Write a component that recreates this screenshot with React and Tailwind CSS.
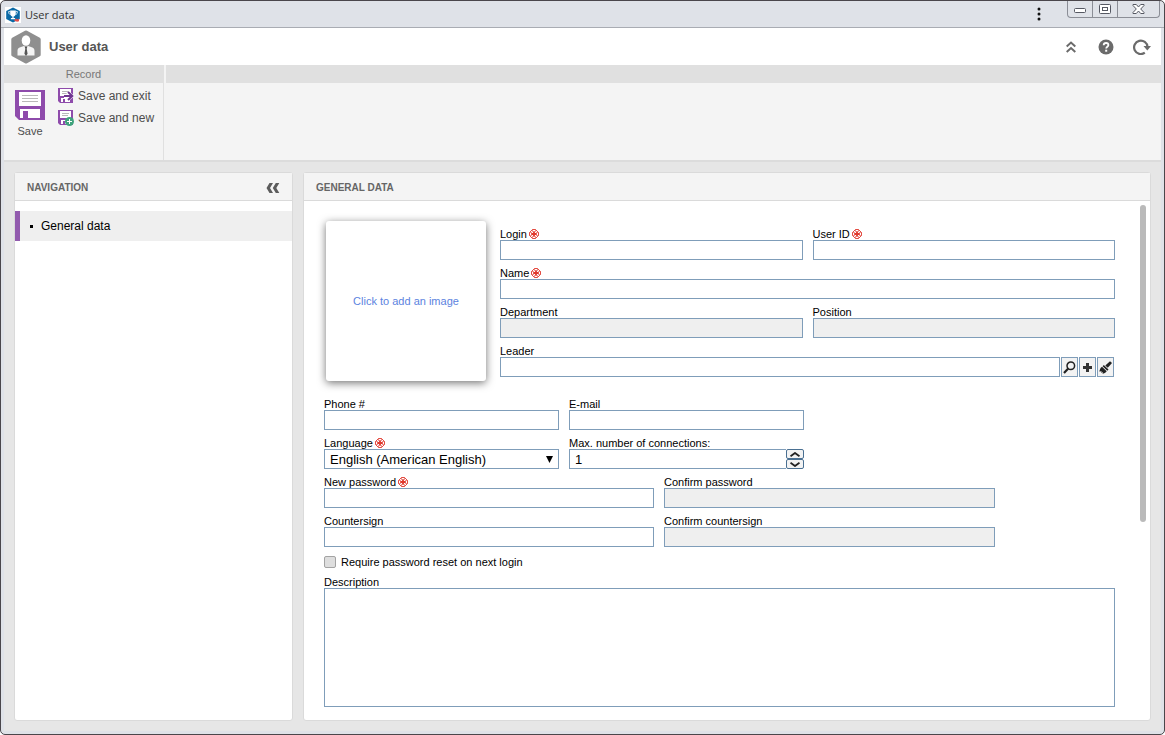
import React, { useState } from 'react';

const inputClass = 'block h-5 w-full min-w-0 rounded-none border border-[#7f9db9] bg-white px-[5px] text-[13px] text-black outline-none disabled:bg-[#efefef]';

function RequiredIcon() {
  return (
    <svg width="10" height="10" viewBox="0 0 10 10" fill="none" stroke="#e0382c" className="shrink-0">
      <path d="M3.500 0.500h3l3 3v3l-3 3h-3l-3-3v-3z" strokeWidth="0.9" />
      <path d="M5 2.200v5.600M2.200 5h5.600" strokeWidth="1.800" />
      <path d="M3.500 0.500v2l-1 1h-2M6.500 0.500v2l1 1h2M3.500 9.500v-2l-1-1h-2M6.500 9.500v-2l1-1h2" strokeWidth="0.600" />
    </svg>
  );
}

function Field({ id, label, required, children, disabled }) {
  return (
    <div className="min-w-0">
      <label htmlFor={id} className="flex h-[13px] items-center gap-0.5 whitespace-nowrap pt-px text-[11px] leading-[13px] text-black">
        {label}
        {required && <RequiredIcon />}
      </label>
      {children || <input id={id} type="text" disabled={disabled} className={inputClass} />}
    </div>
  );
}

function AppLogo() {
  return (
    <svg width="16" height="16" viewBox="0 0 16 16" className="bg-white">
      <path d="M8 0.4l6.8 3.6v8L8 15.6 1.2 12V4z" fill="#0b6aa6" />
      <path d="M5.2 3.6h5.6v2.6c0 1.8-1 3-2.2 3.3v1.5h1.5v1.2H5.9V11h1.5V9.5C6.200 9.200 5.200 8 5.200 6.200z" fill="#fff" />
      <path d="M5 4.600H3.600c0 1.700.6 2.700 1.900 2.900M11 4.600h1.400c0 1.700-.6 2.700-1.900 2.900" fill="none" stroke="#fff" strokeWidth="0.8" />
      <path d="M9 13.600l2-2 1.500 1 1.500-1v2.600l-2 .6z" fill="#e2504c" />
    </svg>
  );
}

function UserHexIcon() {
  return (
    <svg width="30" height="34" viewBox="0 0 30 34">
      <path d="M14 0.700q1-.6 2 0l12.800 7q.9.500.9 1.500v15.600q0 1-.9 1.500l-12.800 7q-1 .6-2 0l-12.800-7q-.9-.5-.9-1.500V9.200q0-1 .9-1.500z" fill="#8f8f8f" />
      <ellipse cx="15" cy="10.500" rx="4.300" ry="5.300" fill="#fff" />
      <path d="M6.500 25.500v-4.800c0-2 1-3 2.800-3.500l3.600-1.200 2.100 1.500 2.100-1.500 3.600 1.200c1.800.5 2.800 1.500 2.800 3.500v4.800z" fill="#f4f4f4" />
      <path d="M13.800 17h2.400l-.5 1.800.9 5L15 26l-1.600-2.200.9-5z" fill="#555" />
    </svg>
  );
}

function DiskIcon() {
  return (
    <svg width="30" height="30" viewBox="0 0 30 30">
      <path d="M0 0h30v30H4l-4-4z" fill="#8e4bab" />
      <rect x="4" y="2" width="22" height="14" fill="#fff" />
      <path d="M7 5.500h16M7 8.500h16M7 11.500h16" stroke="#b9b9b9" />
      <path d="M5 19h20v9H5z" fill="#fff" />
      <rect x="8" y="21" width="5" height="7" fill="#8e4bab" />
    </svg>
  );
}

function SmallDisk({ children }) {
  return (
    <svg width="16" height="16" viewBox="0 0 16 16" className="shrink-0">
      <path d="M0 0h15v15H2l-2-2z" fill="#8e4bab" />
      <path d="M2 1h11v7H2z" fill="#fff" />
      <path d="M4 3.500h7M4 5.500h6" stroke="#b9b9b9" />
      <path d="M3 10h9v4H3z" fill="#fff" />
      <path d="M5 11h2v3H5z" fill="#8e4bab" />
      {children}
    </svg>
  );
}

function WindowTitle() {
  const cell = 'flex items-center justify-center border-r border-[#8b8e96]';
  return (
    <header className="flex h-[27px] border-b border-[#a9acb3] px-1">
      <div className="flex flex-1 items-center gap-1 pt-0.5">
        <AppLogo />
        <span className="font-['Open_Sans',sans-serif] text-[11px] text-[#333]">User data</span>
      </div>
      <button type="button" aria-label="Menu" className="mr-[26px] flex w-1 items-center">
        <svg width="4" height="14" viewBox="0 0 4 14" fill="#111">
          <circle cx="2" cy="2" r="1.500" />
          <circle cx="2" cy="7" r="1.500" />
          <circle cx="2" cy="12" r="1.500" />
        </svg>
      </button>
      <div className="flex h-[17px] overflow-hidden rounded-b-sm border border-t-0 border-[#8b8e96]">
        <button type="button" aria-label="Minimize" className={cell + ' w-[25px]'}>
          <svg width="12" height="6" viewBox="0 0 12 6" className="mt-1">
            <rect x="0.500" y="0.500" width="11" height="4" rx="1" fill="#fff" stroke="#555862" />
          </svg>
        </button>
        <button type="button" aria-label="Maximize" className={cell + ' w-[25px]'}>
          <svg width="12" height="10" viewBox="0 0 12 10" fill="#fff" stroke="#555862">
            <rect x="0.500" y="0.500" width="11" height="9" rx="1" />
            <rect x="3.500" y="3.500" width="5" height="3" />
          </svg>
        </button>
        <button type="button" aria-label="Close" className="flex w-[41px] items-center justify-center">
          <svg width="13" height="10" viewBox="0 0 13 10" fill="#fff" stroke="#555862">
            <path d="M1 .5h3.300L6.500 3 8.700.5H12v1L8.700 5 12 8.500v1H8.700L6.500 7 4.300 9.500H1v-1L4.300 5 1 1.500z" />
          </svg>
        </button>
      </div>
    </header>
  );
}

function PageHeader() {
  return (
    <div className="flex h-[37px] items-center bg-white pl-[7px] pr-[10px]">
      <UserHexIcon />
      <h1 className="ml-2 flex-1 text-[13px] font-bold text-[#555]">User data</h1>
      <div className="flex items-center gap-[19px] text-[#6b6b6b]">
        <button type="button" aria-label="Collapse" className="mr-0.5 flex w-3 justify-center">
          <svg width="10" height="12" viewBox="0 0 10 12" fill="none" stroke="currentColor" strokeWidth="2">
            <path d="M0.700 5.500L5 1.500l4.300 4M0.700 11L5 7l4.300 4" />
          </svg>
        </button>
        <button type="button" aria-label="Help">
          <svg width="16" height="16" viewBox="0 0 16 16">
            <circle cx="8" cy="8" r="7.500" fill="currentColor" />
            <path d="M5.700 6.300c0-1.500 1-2.300 2.400-2.300s2.300.8 2.300 2c0 1.700-2.200 1.700-2.200 3.500" fill="none" stroke="#fff" strokeWidth="1.800" />
            <rect x="7.200" y="10.700" width="2" height="2" fill="#fff" />
          </svg>
        </button>
        <button type="button" aria-label="Refresh">
          <svg width="18" height="16" viewBox="0 0 18 16">
            <path d="M11.800 13.700A6.700 6.700 0 1 1 14.500 8" fill="none" stroke="currentColor" strokeWidth="2.200" />
            <path d="M10.500 7h7.500l-3.700 4.500z" fill="currentColor" />
          </svg>
        </button>
      </div>
    </div>
  );
}

function Toolbar() {
  return (
    <div className="flex h-[97px] border-b-2 border-[#dcdcdc] bg-[#f4f4f4] text-[#4d4d4d]">
      <section className="flex w-40 flex-col border-r border-[#e0e0e0]">
        <h2 className="h-[18px] bg-[#e0e0e0] text-center text-[11px] leading-[18px] text-[#777]">Record</h2>
        <div className="flex gap-[10px] px-2 pt-0.5">
          <button type="button" className="flex w-9 flex-col items-center gap-[5px] pt-[5px] text-[11px] leading-[13px]">
            <DiskIcon />
            Save
          </button>
          <div className="flex flex-col whitespace-nowrap text-xs">
            <button type="button" className="flex h-[22px] items-center gap-1">
              <SmallDisk>
                <path d="M6 8h6M9.500 4.500L13.500 8l-4 3.500" fill="none" stroke="#fff" strokeWidth="4" />
                <path d="M6 8h8M10 4l4.300 4-4.300 4" fill="none" stroke="#6f3590" strokeWidth="2" />
              </SmallDisk>
              Save and exit
            </button>
            <button type="button" className="flex h-[22px] items-center gap-1">
              <SmallDisk>
                <circle cx="11.500" cy="11.500" r="4.500" fill="#3fa37c" />
                <path d="M11.500 9v5M9 11.500h5" stroke="#fff" />
              </SmallDisk>
              Save and new
            </button>
          </div>
        </div>
      </section>
      <div className="ml-0.5 h-[18px] flex-1 bg-[#e0e0e0]" />
    </div>
  );
}

function Navigation() {
  return (
    <aside className="flex w-[279px] shrink-0 flex-col rounded-[3px] border border-[#dadada] bg-white">
      <div className="flex h-7 items-center justify-between border-b border-[#dadada] bg-[#f4f4f4] pl-3 pr-3">
        <h2 className="pt-px text-[10px] font-bold text-[#666]">NAVIGATION</h2>
        <button type="button" aria-label="Collapse navigation" className="pt-0.5">
          <svg width="14" height="10" viewBox="0 0 14 10" fill="#5c5c5c">
            <path d="M3.500 0H7L4 5l3 5H3.500L0.500 5zM9.800 0h3.500l-3 5 3 5H9.800l-3-5z" />
          </svg>
        </button>
      </div>
      <nav className="pt-[10px]">
        <a href="#general" className="flex h-[30px] items-center border-l-[5px] border-[#925bae] bg-[#efefef] pl-[10px] text-xs text-black">
          <span className="mr-2 h-[3px] w-[3px] bg-black" />
          General data
        </a>
      </nav>
    </aside>
  );
}

function LeaderField() {
  const btn = 'flex w-[17px] items-center justify-center border border-[#7f9db9] bg-[#f3f3f3]';
  return (
    <Field id="leader" label="Leader">
      <div className="flex h-5 gap-px pr-px">
        <input id="leader" type="text" className={inputClass} />
        <button type="button" aria-label="Search" className={btn + ' shrink-0'}>
          <svg width="13" height="13" viewBox="0 0 13 13" fill="none" stroke="#222" className="shrink-0">
            <circle cx="7.800" cy="4.800" r="3.800" strokeWidth="1.500" />
            <path d="M5.200 7.600L1 12" strokeWidth="2.200" />
          </svg>
        </button>
        <button type="button" aria-label="Add" className={btn + ' shrink-0'}>
          <svg width="9" height="9" viewBox="0 0 9 9" stroke="#333" strokeWidth="3" className="shrink-0">
            <path d="M4.500 0v9M0 4.500h9" />
          </svg>
        </button>
        <button type="button" aria-label="Clear" className={btn + ' shrink-0'}>
          <svg width="13" height="13" viewBox="0 0 13 13" fill="#222" className="shrink-0">
            <path d="M11 0.300l2 1.800-4.200 4.700L6.300 4.500z" />
            <path d="M4.800 4l4.700 4.500-1.200 1.200L3.600 5.200z" />
            <path d="M3 5.700l4.700 4.500c-1 1.600-2.700 2.300-4.200 2.600l.5-1.700-1.700 1 .3-1.800-2.300.2C0.900 8.900 1 6.800 3 5.700z" />
          </svg>
        </button>
      </div>
    </Field>
  );
}

function ConnectionsField() {
  const [value, setValue] = useState(1);
  const btn = 'flex h-[10px] w-[18px] items-center justify-center rounded-xs border border-[#4a7092] bg-[#f3f3f3]';
  return (
    <Field id="connections" label="Max. number of connections:">
      <div className="flex h-5">
        <input id="connections" type="text" value={value} onChange={(e) => setValue(e.target.value)} className={inputClass + ' border-r-0'} />
        <div className="flex flex-col">
          <button type="button" aria-label="Increase" onClick={() => setValue(Number(value) + 1)} className={btn}>
            <svg width="10" height="5" viewBox="0 0 10 5" fill="none" stroke="#222" strokeWidth="1.800">
              <path d="M0.500 4.300L5 1l4.500 3.300" />
            </svg>
          </button>
          <button type="button" aria-label="Decrease" onClick={() => setValue(Number(value) - 1)} className={btn}>
            <svg width="10" height="5" viewBox="0 0 10 5" fill="none" stroke="#222" strokeWidth="1.800">
              <path d="M0.500 0.700L5 4l4.500-3.300" />
            </svg>
          </button>
        </div>
      </div>
    </Field>
  );
}

function GeneralData() {
  return (
    <main className="flex min-w-0 flex-1 flex-col rounded-[3px] border border-[#dadada] bg-white">
      <div className="flex h-7 items-center border-b border-[#dadada] bg-[#f4f4f4] px-3">
        <h2 className="pt-px text-[10px] font-bold text-[#666]">GENERAL DATA</h2>
      </div>
      <div className="flex flex-1 pl-5 pr-1">
        <form className="flex min-w-0 flex-1 flex-col gap-1.5 pb-[13px] pt-5">
          <div className="mb-[10px] flex gap-[14px] pl-0.5">
            <button type="button" className="h-40 w-40 shrink-0 rounded-[3px] bg-white text-[11px] text-[#5c83e0] shadow-[0_2px_8px_rgba(0,0,0,0.55)]">
              Click to add an image
            </button>
            <div className="flex min-w-0 flex-1 flex-col gap-1.5 pt-1.5">
              <div className="grid grid-cols-2 gap-[10px]">
                <Field id="login" label="Login" required />
                <Field id="userId" label="User ID" required />
              </div>
              <Field id="name" label="Name" required />
              <div className="grid grid-cols-2 gap-[10px]">
                <Field id="department" label="Department" disabled />
                <Field id="position" label="Position" disabled />
              </div>
              <LeaderField />
            </div>
          </div>

          <div className="grid grid-cols-[235fr_235fr_301fr] gap-x-[10px] gap-y-1.5">
            <Field id="phone" label="Phone #" />
            <Field id="email" label="E-mail" />
            <div />
            <Field id="language" label="Language" required>
              <div className="grid items-center">
                <select id="language" className={inputClass + ' col-start-1 row-start-1 appearance-none px-1'}>
                  <option>English (American English)</option>
                </select>
                <svg width="7" height="7" viewBox="0 0 7 7" className="pointer-events-none col-start-1 row-start-1 mr-1.5 justify-self-end">
                  <path d="M0 0h7L3.500 7z" />
                </svg>
              </div>
            </Field>
            <ConnectionsField />
          </div>

          <div className="grid grid-cols-[330fr_331fr_110fr] gap-x-[10px] gap-y-1.5">
            <Field id="password" label="New password" required />
            <Field id="confirmPassword" label="Confirm password" disabled />
            <div />
            <Field id="countersign" label="Countersign" />
            <Field id="confirmCountersign" label="Confirm countersign" disabled />
          </div>

          <div className="flex h-4 items-center gap-[5px] pt-0.5">
            <input id="reset" type="checkbox" className="h-3 w-3 appearance-none rounded-xs border border-[#a3a3a3] bg-[#dedede] checked:bg-[#7f9db9]" />
            <label htmlFor="reset" className="text-[11px] leading-[13px] text-black">Require password reset on next login</label>
          </div>

          <div className="flex flex-1 flex-col">
            <label htmlFor="description" className="h-[13px] pt-px text-[11px] leading-[13px] text-black">Description</label>
            <textarea id="description" className="block min-h-[60px] w-full flex-1 resize-none border border-[#7f9db9] p-1 text-[13px] outline-none" />
          </div>
        </form>
        <div className="ml-[25px] mt-1 h-[317px] w-1.5 rounded-full bg-[#bababa]" />
      </div>
    </main>
  );
}

export default function App() {
  return (
    <div className="flex min-h-screen flex-col rounded-[5px] border border-[#4a464b] bg-[#dfe2e8] font-['Liberation_Sans',Arial,sans-serif]">
      <WindowTitle />
      <div className="mx-[3px] mb-[3px] flex flex-1 flex-col bg-[#e6e6e6]">
        <PageHeader />
        <Toolbar />
        <div className="flex flex-1 gap-[10px] p-[10px]">
          <Navigation />
          <GeneralData />
        </div>
      </div>
    </div>
  );
}
